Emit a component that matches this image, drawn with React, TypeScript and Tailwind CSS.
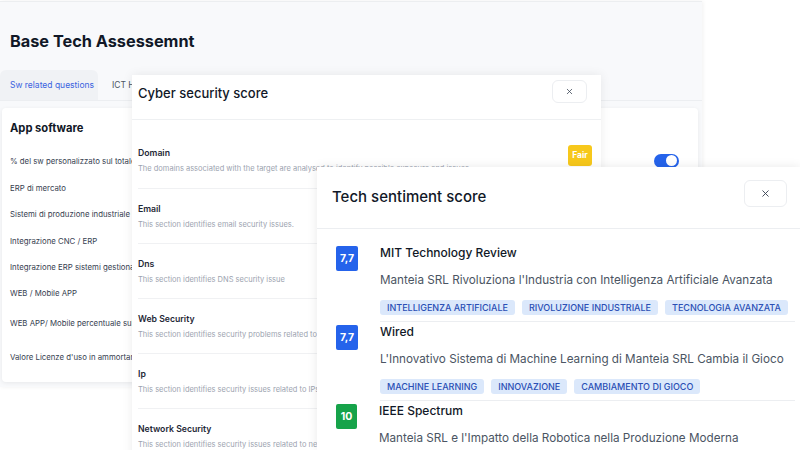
import React from 'react';
import { X } from 'lucide-react';

const swRows = [
    { label: '% del sw personalizzato sul totale', h: 'h-[27px]', toggle: true },
    { label: 'ERP di mercato', h: 'h-[27px]' },
    { label: 'Sistemi di produzione industriale', h: 'h-[26px]' },
    { label: 'Integrazione CNC / ERP', h: 'h-[27px]' },
    { label: 'Integrazione ERP sistemi gestionali', h: 'h-[26px]' },
    { label: 'WEB / Mobile APP', h: 'h-[26px]' },
    { label: 'WEB APP/ Mobile percentuale sul fatturato', h: 'h-[34px]' },
    { label: "Valore Licenze d'uso in ammortamento", h: 'h-[33px]' },
];

const cyberItems = [
    {
        title: 'Domain',
        text: 'The domains associated with the target are analysed to identify possible exposure and issues.',
        badge: 'Fair',
    },
    { title: 'Email', text: 'This section identifies email security issues.' },
    { title: 'Dns', text: 'This section identifies DNS security issue' },
    {
        title: 'Web Security',
        text: 'This section identifies security problems related to websites and web applications.',
    },
    { title: 'Ip', text: 'This section identifies security issues related to IPs and exposed services.' },
    {
        title: 'Network Security',
        text: 'This section identifies security issues related to network configuration.',
    },
];

const sentiment = [
    {
        score: '7,7',
        color: 'bg-[#2563eb] w-[22px]',
        source: 'MIT Technology Review',
        headline: "Manteia SRL Rivoluziona l'Industria con Intelligenza Artificiale Avanzata",
        tags: ['Intelligenza Artificiale', 'Rivoluzione Industriale', 'Tecnologia Avanzata'],
    },
    {
        score: '7,7',
        color: 'bg-[#2563eb] w-[22px]',
        source: 'Wired',
        headline: "L'Innovativo Sistema di Machine Learning di Manteia SRL Cambia il Gioco",
        tags: ['Machine Learning', 'Innovazione', 'Cambiamento di Gioco'],
    },
    {
        score: '10',
        color: 'bg-[#16a34a] w-[21px]',
        source: 'IEEE Spectrum',
        headline: "Manteia SRL e l'Impatto della Robotica nella Produzione Moderna",
        tags: ['Robotica', 'Produzione'],
    },
];

const CloseButton = ({ size, className }: { size: number; className: string }) => (
    <button
        className={`flex items-center justify-center rounded-md border border-[#eceef1] bg-white text-[#374151] ${className}`}
        aria-label="Close"
    >
        <X size={size} strokeWidth={2} />
    </button>
);

const BasePanel = () => (
    <div className="absolute left-0 top-[1px] flex h-[386px] w-[702px] flex-col border-t border-[#eceef0] bg-[#f8f9fb] shadow-[1px_0_4px_rgba(0,0,0,0.06)]">
        <h1 className="ml-[10px] mt-[28px] text-[16.3px] font-bold leading-[22px] text-[#111827]">
            Base Tech Assessemnt
        </h1>
        <div className="mt-[18px] flex h-[31px] items-stretch border-b border-[#eceef1] text-[8.5px]">
            <div className="flex w-[98px] items-center whitespace-nowrap rounded-t-md bg-[#f0f2f5] pl-[10px] text-[#3b63e0]">
                Sw related questions
            </div>
            <div className="flex items-center whitespace-nowrap pl-[14px] text-[#4b5563]">ICT Hardware</div>
        </div>
        <div className="mx-[2px] mt-[7px] flex w-[696px] flex-col rounded-sm bg-white pb-[8px] pl-[8px] pr-[19px] shadow-[0_1px_4px_rgba(0,0,0,0.07)]">
            <div className="flex h-[40px] items-center text-[11.2px] font-bold text-[#111827]">App software</div>
            {swRows.map((r) => (
                <div key={r.label} className={`flex items-center justify-between ${r.h}`}>
                    <span className="whitespace-nowrap text-[7.8px] text-[#374151]">{r.label}</span>
                    {r.toggle && (
                        <div className="-mt-[2px] flex h-[14px] w-[25px] items-center justify-end rounded-full bg-[#2563eb] pr-[2px]">
                            <div className="h-[11px] w-[11px] rounded-full bg-white" />
                        </div>
                    )}
                </div>
            ))}
        </div>
    </div>
);

const CyberPanel = () => (
    <div className="absolute left-[132px] top-[75px] flex h-[400px] w-[469px] flex-col bg-white shadow-[0_0_10px_rgba(0,0,0,0.08)]">
        <div className="flex h-[45px] shrink-0 justify-between border-b border-[#eef0f2] pl-[6px] pr-[14px]">
            <h2 className="mt-[10px] text-[13px] font-medium leading-[17px] text-[#111827]">Cyber security score</h2>
            <CloseButton size={9} className="mt-[5px] h-[23px] w-[35px]" />
        </div>
        <div className="flex flex-col px-[6px] pt-[13px]">
            {cyberItems.map((c, i) => (
                <div
                    key={c.title}
                    className={`flex h-[55px] items-start justify-between pr-[3px] ${i > 0 ? 'border-t border-[#f0f1f3]' : ''}`}
                >
                    <div className="min-w-0 pt-[13px]">
                        <div className="text-[8.7px] font-semibold leading-[14px] text-[#1f2937]">{c.title}</div>
                        <div className="mt-[3px] whitespace-nowrap text-[7.5px] leading-[11px] text-[#9ca3af]">{c.text}</div>
                    </div>
                    {c.badge && (
                        <div className="mt-[12px] flex h-[21px] w-[24px] shrink-0 items-center justify-center rounded-[3px] bg-[#f7c81b] text-[8.5px] font-bold text-white">
                            {c.badge}
                        </div>
                    )}
                </div>
            ))}
        </div>
    </div>
);

const SentimentPanel = () => (
    <div className="absolute left-[317px] top-[167px] flex h-[283px] w-[483px] flex-col bg-white shadow-[0_0_10px_rgba(0,0,0,0.09)]">
        <div className="flex h-[62px] shrink-0 justify-between border-b border-[#eceef1] pl-[15px] pr-[13px]">
            <h2 className="mt-[20px] text-[15px] font-medium leading-[19px] text-[#111827]">Tech sentiment score</h2>
            <CloseButton size={11} className="mt-[13px] h-[27px] w-[43px]" />
        </div>
        <div className="flex flex-col pl-[19px] pr-[5px] pt-[14px]">
            {sentiment.map((s) => (
                <div key={s.source} className="flex gap-[22px]">
                    <div
                        className={`mt-[3px] flex h-[25px] shrink-0 items-center justify-center rounded-[2px] text-[10.5px] font-bold text-white ${s.color}`}
                    >
                        {s.score}
                    </div>
                    <div className="flex min-w-0 flex-1 flex-col border-b border-[#eceef1] pb-[6px] pt-[2px]">
                        <div className="text-[12px] font-medium leading-[16px] text-[#111827]">{s.source}</div>
                        <div className="mt-[11px] whitespace-nowrap text-[11.7px] leading-[16px] text-[#4b5563]">
                            {s.headline}
                        </div>
                        <div className="mt-[12px] flex gap-[7px]">
                            {s.tags.map((t) => (
                                <span
                                    key={t}
                                    className="flex h-[15px] items-center whitespace-nowrap rounded-[3px] bg-[#dbe8fb] px-[7px] text-[9px] font-medium uppercase text-[#2a4fb5]"
                                >
                                    {t}
                                </span>
                            ))}
                        </div>
                    </div>
                </div>
            ))}
        </div>
    </div>
);

export default function App() {
    return (
        <div className="relative h-[450px] w-[800px] overflow-hidden bg-white font-['Inter',sans-serif]">
            <BasePanel />
            <CyberPanel />
            <SentimentPanel />
        </div>
    );
}
